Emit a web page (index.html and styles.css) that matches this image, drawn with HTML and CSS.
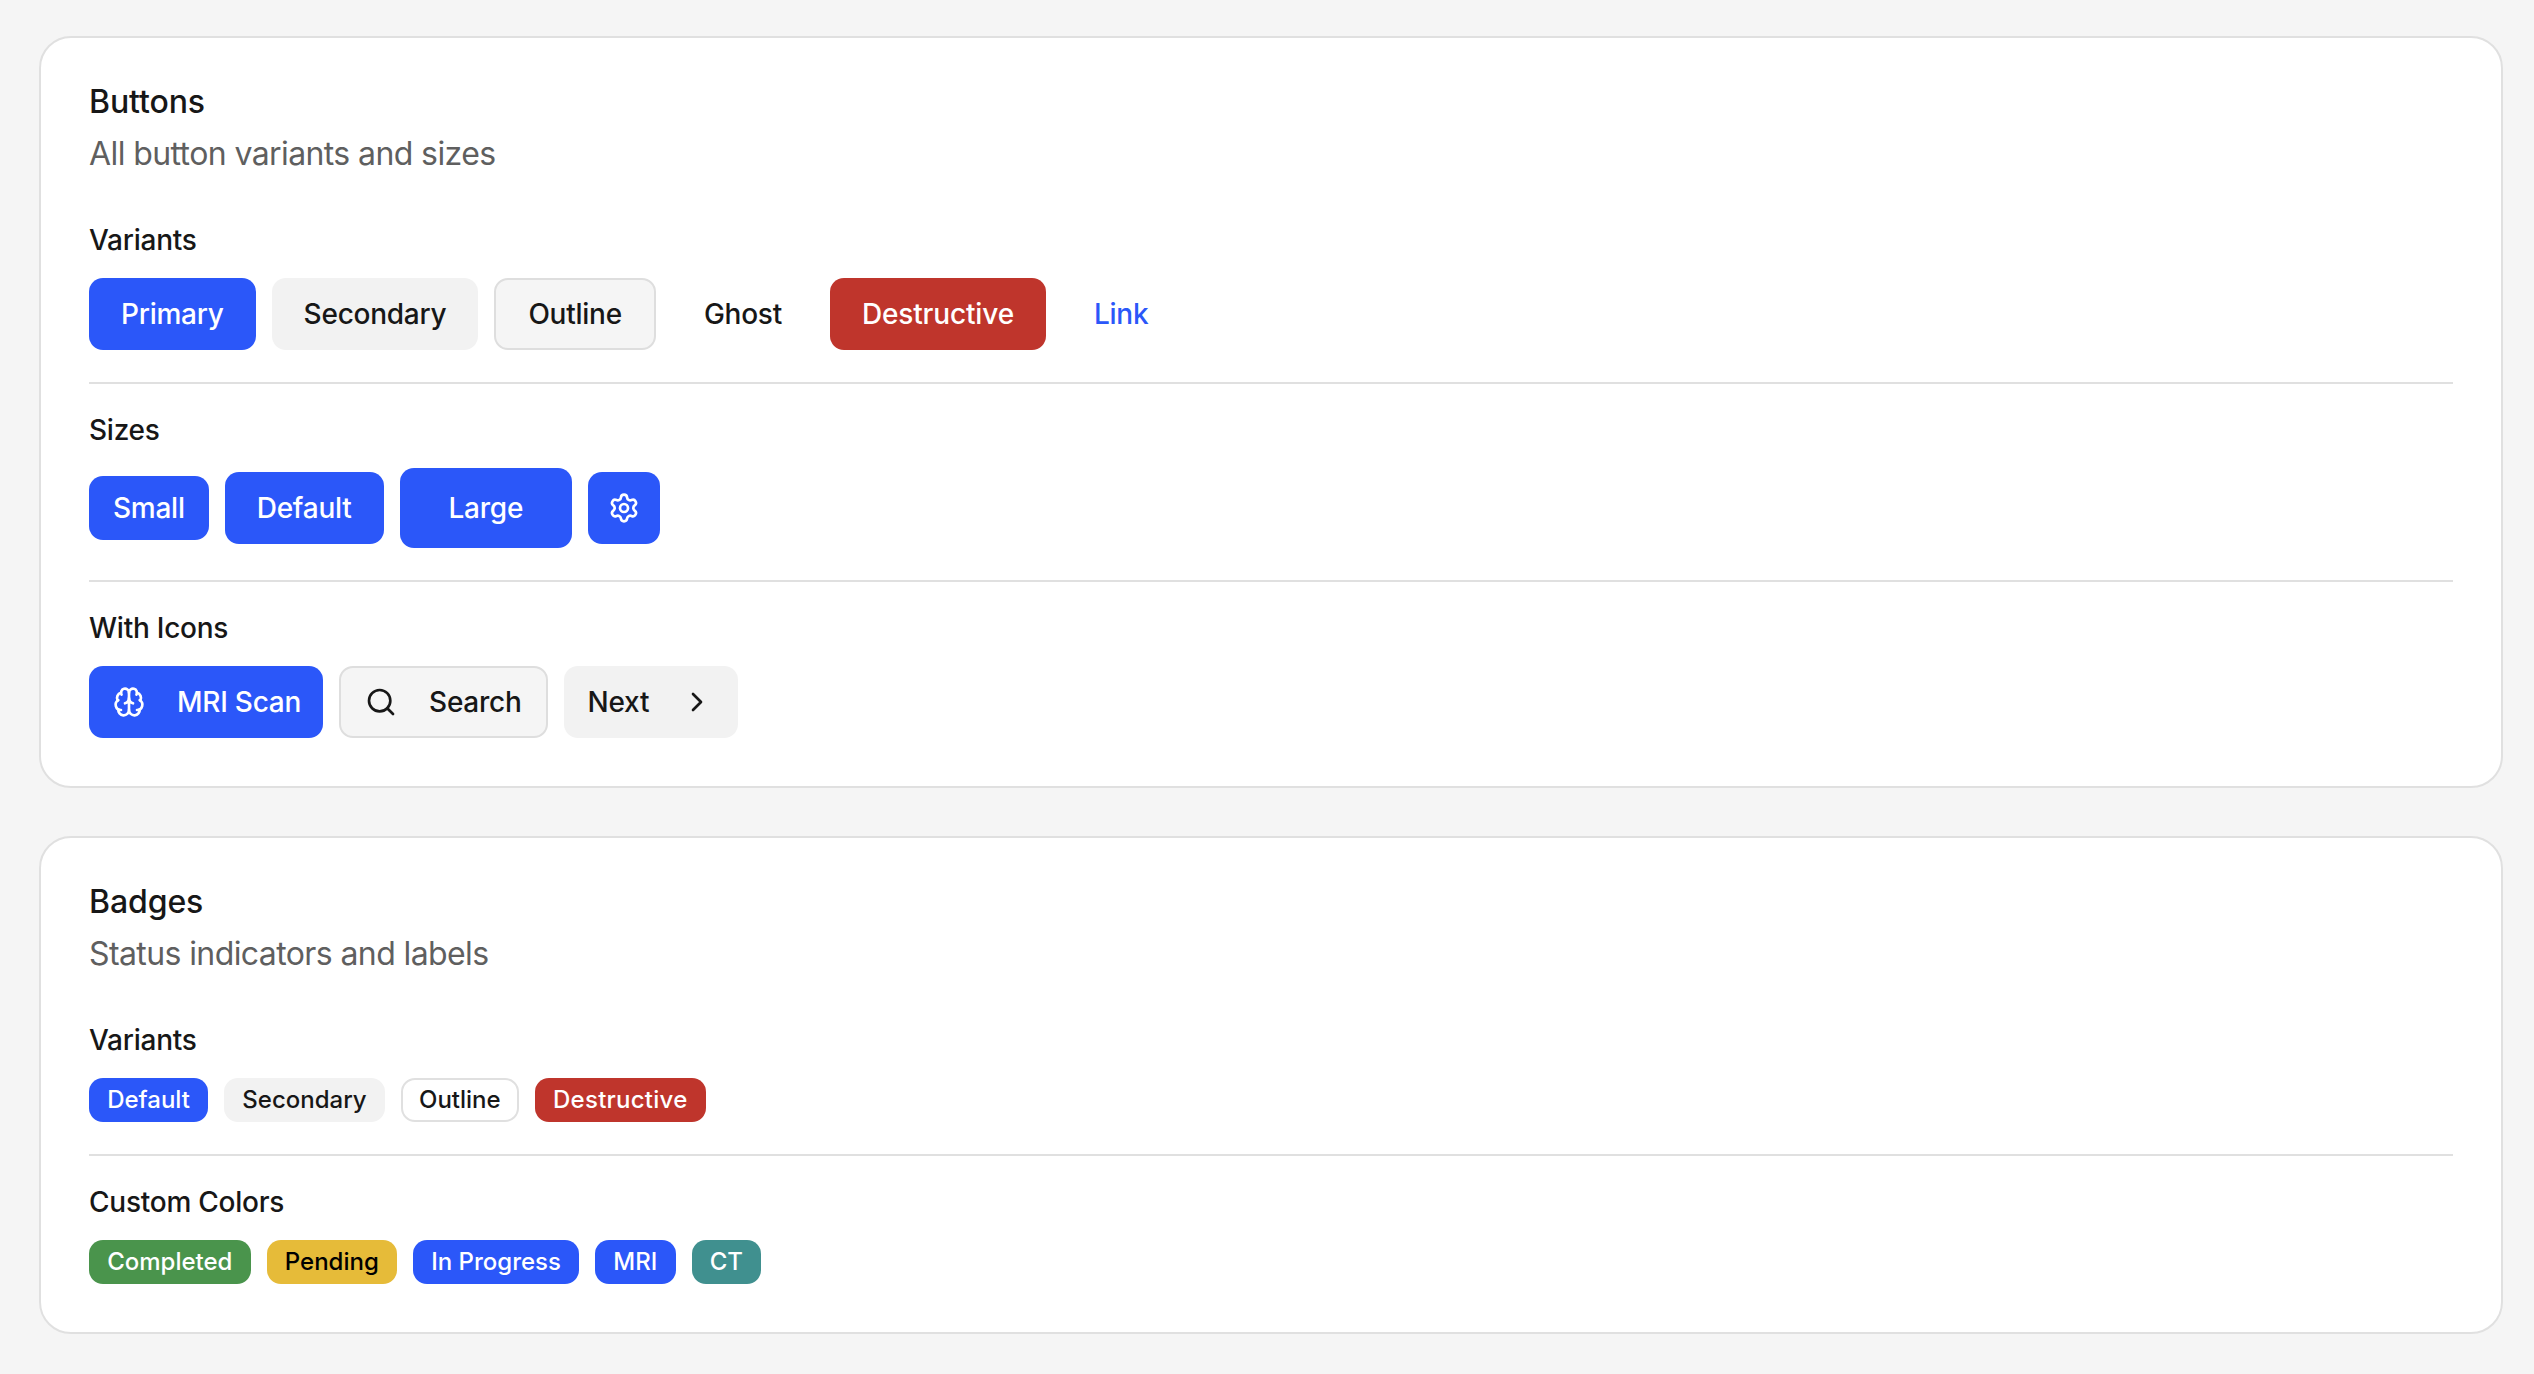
FILE: index.html
```html
<!DOCTYPE html>
<html lang="en">
<head>
<meta charset="utf-8">
<title>Buttons and Badges</title>
<link rel="stylesheet" href="styles.css">
</head>
<body>
<main class="page">
  <section class="card">
    <header class="card-head">
      <h2 class="card-title">Buttons</h2>
      <p class="card-desc">All button variants and sizes</p>
    </header>
    <div class="group">
      <h3 class="label">Variants</h3>
      <div class="row">
        <button class="btn primary">Primary</button>
        <button class="btn secondary">Secondary</button>
        <button class="btn outline">Outline</button>
        <button class="btn ghost">Ghost</button>
        <button class="btn destructive">Destructive</button>
        <button class="btn link">Link</button>
      </div>
    </div>
    <hr class="sep">
    <div class="group">
      <h3 class="label">Sizes</h3>
      <div class="row center">
        <button class="btn primary small">Small</button>
        <button class="btn primary">Default</button>
        <button class="btn primary large">Large</button>
        <button class="btn primary square" aria-label="Settings">
          <svg class="icon" viewBox="0 0 24 24"><path d="M9.671 4.136a2.34 2.34 0 0 1 4.659 0 2.34 2.34 0 0 0 3.319 1.915 2.34 2.34 0 0 1 2.33 4.033 2.34 2.34 0 0 0 0 3.831 2.34 2.34 0 0 1-2.33 4.033 2.34 2.34 0 0 0-3.319 1.915 2.34 2.34 0 0 1-4.659 0 2.34 2.34 0 0 0-3.32-1.915 2.34 2.34 0 0 1-2.33-4.033 2.34 2.34 0 0 0 0-3.831A2.34 2.34 0 0 1 6.35 6.051a2.34 2.34 0 0 0 3.319-1.915"/><circle cx="12" cy="12" r="3"/></svg>
        </button>
      </div>
    </div>
    <hr class="sep">
    <div class="group">
      <h3 class="label">With Icons</h3>
      <div class="row">
        <button class="btn primary with-icon scan">
          <svg class="icon" viewBox="0 0 24 24"><path d="M12 18V5"/><path d="M15 13a4.17 4.17 0 0 1-3-4 4.17 4.17 0 0 1-3 4"/><path d="M17.598 6.5A3 3 0 1 0 12 5a3 3 0 1 0-5.598 1.5"/><path d="M17.997 5.125a4 4 0 0 1 2.526 5.77"/><path d="M18 18a4 4 0 0 0 2-7.464"/><path d="M19.967 17.483A4 4 0 1 1 12 18a4 4 0 1 1-7.967-.517"/><path d="M6 18a4 4 0 0 1-2-7.464"/><path d="M6.003 5.125a4 4 0 0 0-2.526 5.77"/></svg>
          <span>MRI Scan</span>
        </button>
        <button class="btn outline with-icon">
          <svg class="icon" viewBox="0 0 24 24"><path d="m21 21-4.34-4.34"/><circle cx="11" cy="11" r="8"/></svg>
          <span>Search</span>
        </button>
        <button class="btn secondary with-icon next">
          <span>Next</span>
          <svg class="icon" viewBox="0 0 24 24"><path d="m9 18 6-6-6-6"/></svg>
        </button>
      </div>
    </div>
  </section>

  <section class="card">
    <header class="card-head">
      <h2 class="card-title">Badges</h2>
      <p class="card-desc">Status indicators and labels</p>
    </header>
    <div class="group">
      <h3 class="label">Variants</h3>
      <div class="row">
        <span class="badge b-blue">Default</span>
        <span class="badge b-secondary">Secondary</span>
        <span class="badge b-outline">Outline</span>
        <span class="badge b-red">Destructive</span>
      </div>
    </div>
    <hr class="sep">
    <div class="group">
      <h3 class="label">Custom Colors</h3>
      <div class="row">
        <span class="badge b-green">Completed</span>
        <span class="badge b-yellow">Pending</span>
        <span class="badge b-blue">In Progress</span>
        <span class="badge b-blue">MRI</span>
        <span class="badge b-teal">CT</span>
      </div>
    </div>
  </section>
</main>
</body>
</html>
```

FILE: styles.css
```css
* { box-sizing: border-box; }
html, body { margin: 0; height: 100%; }
body {
  background: #f5f5f5;
  color: #171717;
  font-family: Inter, "Liberation Sans", sans-serif;
  -webkit-font-smoothing: antialiased;
}
.page {
  display: flex;
  flex-direction: column;
  gap: 48px;
  padding: 36px 31px 0 39px;
}
.card {
  background: #fff;
  border: 2px solid #e0e0e0;
  border-radius: 32px;
  padding: 48px;
}
.card-head { margin-bottom: 52px; }
.card-title {
  margin: 0;
  font-size: 32px;
  line-height: 32px;
  font-weight: 500;
  letter-spacing: -0.1px;
}
.card-desc {
  margin: 16px 0 0;
  font-size: 32px;
  line-height: 40px;
  font-weight: 400;
  letter-spacing: -0.6px;
  color: #5f5f5f;
}
.group { display: flex; flex-direction: column; gap: 24px; }
.label {
  margin: 0;
  font-size: 28px;
  line-height: 28px;
  font-weight: 500;
  letter-spacing: -0.25px;
}
.row { display: flex; gap: 16px; }
.center { align-items: center; }
.sep {
  margin: 32px 0;
  border: 0;
  height: 2px;
  background: #e0e0e0;
}
.btn {
  display: inline-flex;
  align-items: center;
  justify-content: center;
  gap: 32px;
  height: 72px;
  padding: 0 32px;
  border: 0;
  border-radius: 14px;
  font: 500 28px/40px Inter, "Liberation Sans", sans-serif;
  letter-spacing: -0.25px;
  color: #171717;
  background: transparent;
}
.primary { background: #2b57f9; color: #fff; }
.secondary { background: #f2f2f2; }
.outline { background: #f5f5f5; border: 2px solid #dedede; }
.destructive { background: #bf352c; color: #fff; letter-spacing: -0.15px; }
.link { color: #2b57f9; }
.small { height: 64px; padding: 0 24px; }
.large { height: 80px; padding: 0 49px; }
.square { width: 72px; padding: 0; }
.with-icon { padding: 0 24px; }
.scan { padding-right: 22px; }
.next { padding-right: 25px; }
.icon {
  width: 32px;
  height: 32px;
  fill: none;
  stroke: currentColor;
  stroke-width: 2;
  stroke-linecap: round;
  stroke-linejoin: round;
}
.badge {
  display: inline-flex;
  align-items: center;
  height: 44px;
  padding: 0 16.2px;
  border: 2px solid transparent;
  border-radius: 14px;
  font-size: 24px;
  line-height: 32px;
  font-weight: 500;
}
.b-blue { background: #2b57f9; color: #fff; }
.b-secondary { background: #f2f2f2; }
.b-outline { background: #fff; border-color: #e0e0e0; }
.b-red { background: #bf352c; color: #fff; letter-spacing: 0.25px; }
.b-green { background: #4a944c; color: #fff; }
.b-yellow { background: #e6bb39; color: #000; }
.b-teal { background: #40908f; color: #fff; }
```
